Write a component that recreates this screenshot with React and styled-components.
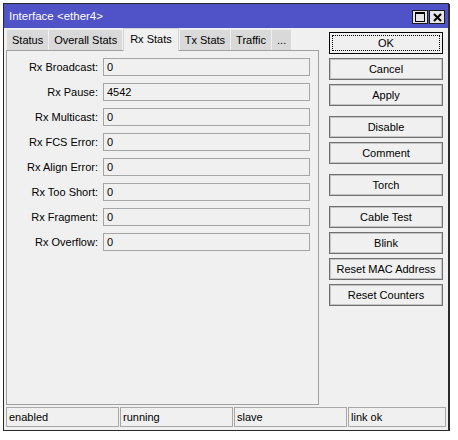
import styled, { createGlobalStyle } from 'styled-components';

const GlobalStyle = createGlobalStyle`
    html, body {
        margin: 0;
        padding: 0;
        background: #ffffff;
    }
    body {
        padding: 3px 0 0 3px;
        font-family: "Liberation Sans", Arial, sans-serif;
        font-size: 11px;
        color: #000;
    }
`;

const fields = [
    ["Rx Broadcast:", "0"],
    ["Rx Pause:", "4542"],
    ["Rx Multicast:", "0"],
    ["Rx FCS Error:", "0"],
    ["Rx Align Error:", "0"],
    ["Rx Too Short:", "0"],
    ["Rx Fragment:", "0"],
    ["Rx Overflow:", "0"],
];

const tabs = ["Status", "Overall Stats", "Rx Stats", "Tx Stats", "Traffic", "..."];

const buttons = [
    { label: "OK", focused: true },
    { label: "Cancel" },
    { label: "Apply" },
    { label: "Disable", spaced: true },
    { label: "Comment" },
    { label: "Torch", spaced: true },
    { label: "Cable Test", spaced: true },
    { label: "Blink" },
    { label: "Reset MAC Address" },
    { label: "Reset Counters" },
];

const statuses = [
    ["enabled", 113],
    ["running", 113],
    ["slave", 113],
    ["link ok", 98],
];

export default function App(){
    return(
        <>
            <GlobalStyle />
            <Window>
                <TitleBar>
                    <Title>Interface &lt;ether4&gt;</Title>
                    <TitleButtons>
                        <TitleButton>
                            <svg width="10" height="10" viewBox="0 0 10 10">
                                <rect x="0.5" y="0.5" width="9" height="9" fill="none" stroke="#000" />
                                <line x1="0" y1="1.5" x2="10" y2="1.5" stroke="#000" />
                            </svg>
                        </TitleButton>
                        <TitleButton>
                            <svg width="9" height="9" viewBox="0 0 9 9">
                                <path d="M1 1 L8 8 M8 1 L1 8" stroke="#000" strokeWidth="2" />
                            </svg>
                        </TitleButton>
                    </TitleButtons>
                </TitleBar>
                <Body>
                    <LeftColumn>
                        <TabRow>
                            {tabs.map(t => (
                                <Tab key={t} active={t === "Rx Stats"}>{t}</Tab>
                            ))}
                        </TabRow>
                        <Panel>
                            {fields.map(([label, value]) => (
                                <FieldRow key={label}>
                                    <FieldLabel>{label}</FieldLabel>
                                    <FieldBox>{value}</FieldBox>
                                </FieldRow>
                            ))}
                        </Panel>
                    </LeftColumn>
                    <ButtonColumn>
                        {buttons.map(b => (
                            <Button key={b.label} focused={b.focused} spaced={b.spaced}>
                                {b.focused ? <FocusRing>{b.label}</FocusRing> : b.label}
                            </Button>
                        ))}
                    </ButtonColumn>
                </Body>
                <StatusBar>
                    {statuses.map(([s, w]) => (
                        <StatusCell key={s} width={w}>{s}</StatusCell>
                    ))}
                </StatusBar>
            </Window>
        </>
    );
}

const Window = styled.div`
    width: 444px;
    height: 426px;
    border: 1px solid #2a2a2a;
    box-shadow: 1px 1px 0 #2a2a2a;
    background: #f0f0f0;
    display: flex;
    flex-direction: column;
`;

const TitleBar = styled.div`
    height: 24px;
    background: #5052c8;
    display: flex;
    align-items: center;
    justify-content: space-between;
    padding: 0 3px 0 5px;
`;

const Title = styled.div`
    color: #ffffff;
    font-size: 11.5px;
`;

const TitleButtons = styled.div`
    display: flex;
    gap: 1px;
    margin-top: 2px;
`;

const TitleButton = styled.div`
    width: 14px;
    height: 12px;
    border: 1px solid #1a1a1a;
    background: #e6e6e6;
    display: flex;
    align-items: center;
    justify-content: center;
`;

const Body = styled.div`
    flex: 1;
    display: flex;
    padding-left: 2px;
`;

const LeftColumn = styled.div`
    width: 313px;
    display: flex;
    flex-direction: column;
`;

const TabRow = styled.div`
    height: 22px;
    display: flex;
    align-items: flex-end;
    gap: 1px;
    padding-left: 1px;
    position: relative;
    z-index: 1;
`;

const Tab = styled.div`
    height: ${p => p.active ? "23px" : "20px"};
    margin-bottom: ${p => p.active ? "-1px" : "0"};
    padding: 0 ${p => p.active ? "6px" : "5px"};
    background: ${p => p.active ? "#f0f0f0" : "#d9d9d9"};
    border: ${p => p.active ? "1px solid #d4d4d4" : "none"};
    border-bottom: none;
    box-sizing: border-box;
    display: flex;
    align-items: center;
    padding-bottom: ${p => p.active ? "3px" : "0"};
    white-space: nowrap;
`;

const Panel = styled.div`
    flex: 1;
    border: 1px solid #a0a0a0;
    padding: 7px 0 0 0;
    display: flex;
    flex-direction: column;
    gap: 7px;
`;

const FieldRow = styled.div`
    display: flex;
    align-items: center;
    gap: 5px;
`;

const FieldLabel = styled.div`
    width: 91px;
    text-align: right;
    white-space: nowrap;
`;

const FieldBox = styled.div`
    width: 207px;
    height: 18px;
    box-sizing: border-box;
    border: 1px solid #a5a5a5;
    padding-left: 3px;
    display: flex;
    align-items: center;
`;

const ButtonColumn = styled.div`
    margin-left: 10px;
    padding-top: 4px;
    display: flex;
    flex-direction: column;
    gap: 4px;
`;

const Button = styled.div`
    width: 114px;
    height: 22px;
    box-sizing: border-box;
    margin-top: ${p => p.spaced ? "6px" : "0"};
    border: 1px solid ${p => p.focused ? "#000" : "#707070"};
    box-shadow: inset 0 0 0 1px ${p => p.focused ? "#f0f0f0" : "#c4c4c4"};
    display: flex;
    align-items: center;
    justify-content: center;
    padding: ${p => p.focused ? "2px" : "0"};
`;

const FocusRing = styled.div`
    flex: 1;
    align-self: stretch;
    border: 1px dotted #000;
    display: flex;
    align-items: center;
    justify-content: center;
`;

const StatusBar = styled.div`
    display: flex;
    gap: 1px;
    padding: 2px 0 3px 2px;
`;

const StatusCell = styled.div`
    width: ${p => p.width}px;
    height: 20px;
    box-sizing: border-box;
    border: 1px solid #a8a8a8;
    padding-left: 2px;
    display: flex;
    align-items: center;
`;
